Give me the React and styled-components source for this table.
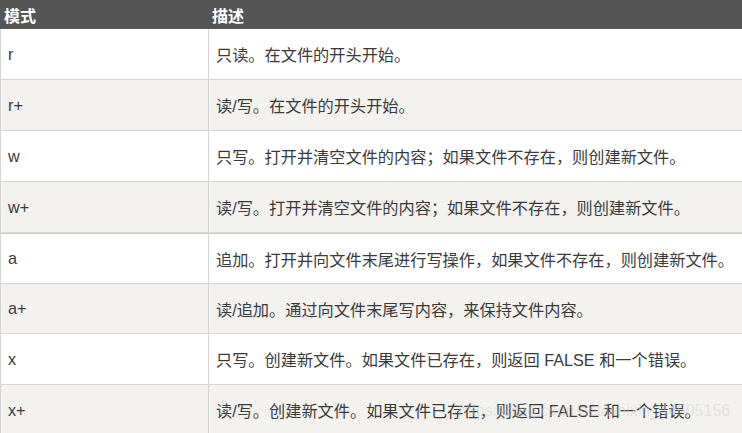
import styled, { createGlobalStyle } from "styled-components";

const GlobalStyle = createGlobalStyle`
  html, body {
    margin: 0;
    padding: 0;
    background: #fff;
    overflow: hidden;
  }
`;

const rows = [
  { mode: "r", desc: "只读。在文件的开头开始。" },
  { mode: "r+", desc: "读/写。在文件的开头开始。" },
  { mode: "w", desc: "只写。打开并清空文件的内容；如果文件不存在，则创建新文件。" },
  { mode: "w+", desc: "读/写。打开并清空文件的内容；如果文件不存在，则创建新文件。" },
  { mode: "a", desc: "追加。打开并向文件末尾进行写操作，如果文件不存在，则创建新文件。", split: true },
  { mode: "a+", desc: "读/追加。通过向文件末尾写内容，来保持文件内容。", short: true },
  { mode: "x", desc: "只写。创建新文件。如果文件已存在，则返回 FALSE 和一个错误。" },
  { mode: "x+", desc: "读/写。创建新文件。如果文件已存在，则返回 FALSE 和一个错误。" },
];

export default function App() {
  return (
    <>
      <GlobalStyle />
      <StyledTable>
        <StyledHead>
          <StyledHeadCell>模式</StyledHeadCell>
          <StyledHeadCell>描述</StyledHeadCell>
        </StyledHead>
        {rows.map((row, i) => (
          <StyledRow
            key={row.mode}
            $even={i % 2 === 1}
            $split={row.split}
            $short={row.short}
          >
            <StyledCell>{row.mode}</StyledCell>
            <StyledCell>{row.desc}</StyledCell>
          </StyledRow>
        ))}
        <StyledWatermark>https://blog.csdn.net/weixin_44505156</StyledWatermark>
      </StyledTable>
    </>
  );
}

const StyledTable = styled.div`
  position: relative;
  width: 760px;
  font-family: "Liberation Sans", "Noto Sans CJK SC", Arial, sans-serif;
  color: #3a3a3a;
`;

const StyledHead = styled.div`
  display: grid;
  grid-template-columns: 208px 1fr;
  height: 29px;
  background: #555555;
  color: #fff;
`;

const StyledHeadCell = styled.div`
  display: flex;
  align-items: center;
  padding: 1px 0 0 4px;
  font-size: 16px;
  font-weight: bold;
`;

const StyledRow = styled.div`
  display: grid;
  grid-template-columns: 208px 1fr;
  height: ${(props) => (props.$short ? "50px" : "51px")};
  box-sizing: border-box;
  border-bottom: 1px solid #d5d5d5;
  border-top: ${(props) => (props.$split ? "1px solid #d0d0d0" : "none")};
  background: ${(props) => (props.$even ? "#f3f2ef" : "#ffffff")};
`;

const StyledCell = styled.div`
  display: flex;
  align-items: center;
  padding-left: 7px;
  border-left: 1px solid #d5d5d5;
  font-size: 16.2px;
  white-space: nowrap;
`;

const StyledWatermark = styled.div`
  position: absolute;
  left: 458px;
  top: 402px;
  font-size: 16px;
  color: rgba(205, 205, 205, 0.45);
  white-space: nowrap;
  pointer-events: none;
`;
